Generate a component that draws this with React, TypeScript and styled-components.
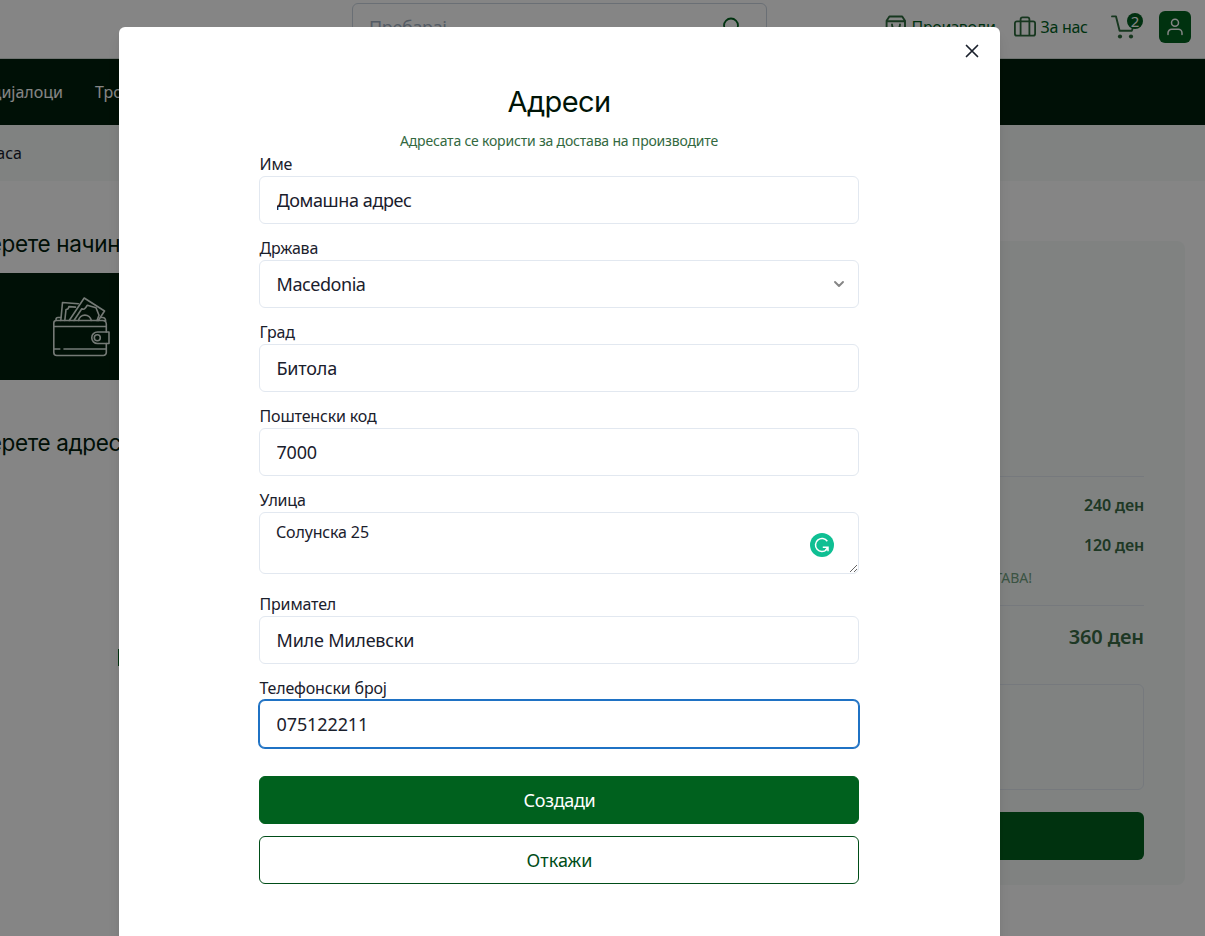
import React from "react";
import styled, { createGlobalStyle } from "styled-components";

const sans = '"Noto Sans", "Open Sans", sans-serif';
const display = 'Inter, "Liberation Sans", sans-serif';

const GlobalStyle = createGlobalStyle`
  *, *::before, *::after { box-sizing: border-box; }
  html, body { margin: 0; padding: 0; background: #fff; overflow: hidden; }
  body { font-family: ${sans}; font-size: 16px; line-height: 24px; color: #1a202c; }
  h1, h2, p { margin: 0; font-weight: 400; }
  button { cursor: pointer; }
`;

const Screen = styled.div`
  position: relative;
  width: 1205px;
  height: 936px;
  overflow: hidden;
  background: #fff;
`;

const Header = styled.header`
  display: flex;
  align-items: flex-start;
  height: 59px;
  padding-left: 352px;
  border-bottom: 1px solid #d5dcd8;
`;

const SearchBox = styled.div`
  display: flex;
  align-items: center;
  justify-content: space-between;
  width: 415px;
  height: 48px;
  margin-top: 3px;
  padding: 0 22px 0 16px;
  border: 1px solid #cbd5e0;
  border-radius: 6px;
  color: #a0aec0;
  font-size: 18px;
  letter-spacing: -0.35px;
`;

const HeaderLinks = styled.nav`
  display: flex;
  align-items: center;
  height: 54px;
  margin-left: 118px;
  color: #00611e;
`;

const HeaderLink = styled.a<{ $width: number }>`
  display: flex;
  align-items: center;
  gap: 4.5px;
  width: ${(p) => p.$width}px;
  letter-spacing: -0.3px;
  white-space: nowrap;
`;

const CartButton = styled.div`
  position: relative;
  display: flex;
  width: 48px;
  height: 28px;
`;

const CartCount = styled.span`
  position: absolute;
  left: 16px;
  top: 0;
  width: 16px;
  height: 16px;
  border-radius: 50%;
  background: #005c1f;
  color: #fff;
  font-size: 15px;
  line-height: 16px;
  text-align: center;
`;

const UserButton = styled.div`
  display: grid;
  place-items: center;
  width: 32px;
  height: 32px;
  border-radius: 6px;
  background: #00611e;
`;

const CategoryBar = styled.nav`
  display: flex;
  align-items: center;
  height: 66px;
  background: #00200c;
  color: #fff;
`;

const Category = styled.a<{ $width: number; $align: "flex-start" | "flex-end" }>`
  display: flex;
  justify-content: ${(p) => p.$align};
  width: ${(p) => p.$width}px;
  margin-right: 32px;
  white-space: nowrap;
`;

const Breadcrumb = styled.div`
  display: flex;
  align-items: center;
  height: 56px;
  background: #f5faf8;
`;

const Crumb = styled.span`
  display: flex;
  justify-content: flex-end;
  width: 22px;
`;

const Main = styled.main`
  display: flex;
  justify-content: space-between;
  padding-right: 20px;
`;

const Checkout = styled.section`
  width: 500px;
  padding-top: 47px;
`;

const SectionTitle = styled.h2`
  display: flex;
  height: 32px;
  margin-left: -51.5px;
  font-family: ${display};
  font-size: 22.5px;
  line-height: 32px;
  color: #00200c;
  letter-spacing: -0.35px;
  white-space: nowrap;
`;

const PaymentOption = styled.div`
  display: flex;
  align-items: center;
  height: 107px;
  margin: 13px 0 47px;
  padding-left: 52px;
  background: #00200c;
`;

const AddAddress = styled.div`
  width: 240px;
  height: 17px;
  margin: 190px 0 0 118px;
  background: #00611e;
`;

const Summary = styled.aside`
  display: flex;
  flex-direction: column;
  width: 420px;
  height: 644px;
  margin-top: 60px;
  padding: 235px 41px 0 40px;
  border-radius: 8px;
  background: #f5faf8;
  color: #3a6b46;
`;

const PriceRow = styled.div<{ $size: number; $height: number; $top?: number; $rule?: boolean }>`
  display: flex;
  align-items: center;
  justify-content: flex-end;
  height: ${(p) => p.$height}px;
  padding-top: ${(p) => p.$top ?? 0}px;
  border-top: ${(p) => (p.$rule ? "1px solid #e2e8f0" : "0")};
  font-size: ${(p) => p.$size}px;
  font-weight: 600;
  letter-spacing: -0.15px;
`;

const ShippingNote = styled.p`
  display: flex;
  justify-content: flex-end;
  height: 40px;
  padding: 0 112px 0 0;
  font-size: 14px;
  line-height: 25px;
  color: #71a07f;
  white-space: nowrap;
`;

const Comment = styled.div`
  height: 106px;
  margin: 17px 0 22px;
  border: 1px solid #e2e8f0;
  border-radius: 6px;
`;

const OrderButton = styled.div`
  height: 48px;
  border-radius: 6px;
  background: #00611e;
`;

const Overlay = styled.div`
  position: absolute;
  inset: 0;
  display: flex;
  justify-content: center;
  align-items: flex-start;
  padding: 27px 86px 0 0;
  background: rgba(0, 0, 0, 0.48);
`;

const Modal = styled.div`
  position: relative;
  flex: none;
  width: 881px;
  height: 960px;
  padding: 56px 141px 0 140px;
  border-radius: 6px;
  background: #fff;
  box-shadow: 0 10px 15px -3px rgba(0, 0, 0, 0.1), 0 4px 6px -2px rgba(0, 0, 0, 0.05);
`;

const CloseButton = styled.button`
  position: absolute;
  top: 8px;
  right: 12px;
  display: grid;
  place-items: center;
  width: 32px;
  height: 32px;
  padding: 0;
  border: 0;
  background: none;
`;

const Title = styled.h1`
  height: 38px;
  font-family: ${display};
  font-size: 29px;
  line-height: 38px;
  letter-spacing: -0.6px;
  text-align: center;
  color: #001407;
`;

const Subtitle = styled.p`
  height: 31px;
  padding-top: 9px;
  font-size: 14px;
  line-height: 22px;
  letter-spacing: -0.19px;
  text-align: center;
  color: #33693f;
`;

const Field = styled.label<{ $gap?: number }>`
  display: flex;
  flex-direction: column;
  margin-bottom: ${(p) => p.$gap ?? 12}px;
`;

const FieldName = styled.span`
  height: 24px;
  padding-left: 0.5px;
  letter-spacing: -0.17px;
`;

const Input = styled.input<{ $focused?: boolean; $spacing?: number }>`
  height: 48px;
  padding: 0 16.5px;
  border: 1px solid ${(p) => (p.$focused ? "#1f72c4" : "#e2e8f0")};
  border-radius: 6px;
  box-shadow: ${(p) => (p.$focused ? "0 0 0 1px #1f72c4" : "none")};
  background: #fff;
  outline: none;
  font-family: ${sans};
  font-size: 18px;
  letter-spacing: ${(p) => p.$spacing ?? -0.2}px;
  color: #1a202c;
`;

const SelectBox = styled.div`
  display: flex;
  align-items: center;
  justify-content: space-between;
  height: 48px;
  padding: 0 12px 0 16.5px;
  border: 1px solid #e2e8f0;
  border-radius: 6px;
  font-size: 18px;
  letter-spacing: -0.45px;
`;

const StreetWrap = styled.div`
  position: relative;
  display: flex;
  height: 62px;
`;

const Street = styled.textarea`
  width: 100%;
  height: 62px;
  padding: 8px 16px;
  border: 1px solid #e2e8f0;
  border-radius: 6px;
  outline: none;
  resize: vertical;
  overflow: hidden;
  font-family: ${sans};
  font-size: 16px;
  line-height: 22px;
  letter-spacing: -0.15px;
  color: #1a202c;
`;

const GrammarBadge = styled.span`
  position: absolute;
  top: 21px;
  right: 25px;
  display: flex;
  width: 24px;
  height: 24px;
`;

const Actions = styled.div`
  display: flex;
  flex-direction: column;
  gap: 12px;
`;

const ActionButton = styled.button<{ $solid?: boolean }>`
  height: 48px;
  padding: 0 5px 0 6px;
  border: 1px solid ${(p) => (p.$solid ? "#00611e" : "#004d18")};
  border-radius: 6px;
  background: ${(p) => (p.$solid ? "#00611e" : "#fff")};
  color: ${(p) => (p.$solid ? "#fff" : "#004d18")};
  font-family: ${sans};
  font-size: 18px;
  letter-spacing: ${(p) => (p.$solid ? -0.3 : 0)}px;
`;

const SearchIcon = () => (
  <svg width="22" height="22" viewBox="0 0 22 22" fill="none" stroke="#00611e" strokeWidth="1.8" strokeLinecap="round">
    <circle cx="9" cy="9.5" r="7" />
    <path d="M14 14.5 19 19.5" />
  </svg>
);

const BagIcon = () => (
  <svg width="22" height="24" viewBox="0 0 22 24" fill="none" stroke="#2c6a3c" strokeWidth="1.9" strokeLinejoin="round" strokeLinecap="round">
    <path d="M1.600 5.800 4.400 1.500h12.800l2.800 4.300V19a2 2 0 0 1-2 2H3.600a2 2 0 0 1-2-2ZM1.600 6.200H20M7 9.500c0 6 8 6 8 0" />
  </svg>
);

const BriefcaseIcon = () => (
  <svg width="22" height="22" viewBox="0 0 22 22" fill="none" stroke="#2c6a3c" strokeWidth="1.8" strokeLinejoin="round">
    <rect x="0.900" y="5.300" width="20.200" height="14.400" rx="2" />
    <path d="M6.600 19.700V3.300a2 2 0 0 1 2-2h4.800a2 2 0 0 1 2 2v16.400" />
  </svg>
);

const CartIcon = () => (
  <svg width="26" height="28" viewBox="0 0 26 28" fill="none" stroke="#2c6a3c" strokeWidth="1.9" strokeLinecap="round" strokeLinejoin="round">
    <path d="M1 3.400H5l3.600 14.300h12.200l2.700-7.500" />
    <circle cx="9" cy="23.500" r="2.100" fill="#2c6a3c" stroke="none" />
    <circle cx="20" cy="23.500" r="2.100" fill="#2c6a3c" stroke="none" />
  </svg>
);

const UserIcon = () => (
  <svg width="18" height="18" viewBox="0 0 18 18" fill="none" stroke="#fff" strokeWidth="1.500" strokeLinecap="round">
    <circle cx="9" cy="4.700" r="3.500" />
    <path d="M2 16.500v-1.500a3.700 3.700 0 0 1 3.700-3.700h6.600a3.700 3.700 0 0 1 3.700 3.700v1.500" />
  </svg>
);

const WalletIcon = () => (
  <svg width="58" height="60" viewBox="0 0 58 60" fill="none" stroke="#e0eae3" strokeWidth="1.600" strokeLinejoin="round" strokeLinecap="round">
    <path d="M8.800 23.500 10.500 5.500l15.800 1.300M12.800 23.500l1.200-11c1.700 0 2.600-1 2.900-2.900l6.600.5" />
    <path d="m17.200 23.500 15-22.500L52.500 14l-6.200 9.500" />
    <path d="m22 23.500 7.800-11.700c1.500.8 3 .3 3.800-1.100l1.700-2.400 8.700 2.400 3 7.500-2 5.300" />
    <path d="M26.500 23.500a6.500 6.500 0 0 1 12.800 0" />
    <path d="M1.800 26v29.500a3 3 0 0 0 3 3h46.500a3 3 0 0 0 3-3V46.500M54.300 35V27a3.500 3.500 0 0 0-3.500-3.500H4.500c-2 0-2.700 1-2.700 2.500M4 23.500v-1c0-1.500.8-2 2-2h2.700M48.500 20.500h2c2 0 3.200 1 3.200 4" />
    <path d="M1.800 29.500h52.500M1.800 52h6M12 52h42.300" />
    <path d="M57 35H45.500a5.700 5.700 0 0 0 0 11.500H57Z" />
    <circle cx="45.300" cy="40.800" r="3" />
  </svg>
);

const CloseIcon = () => (
  <svg width="14" height="14" viewBox="0 0 14 14" stroke="#1a202c" strokeWidth="1.700" strokeLinecap="round">
    <path d="m1.500 1.500 11 11m0-11-11 11" />
  </svg>
);

const ChevronIcon = () => (
  <svg width="14" height="14" viewBox="0 0 14 14" fill="none" stroke="#858585" strokeWidth="1.900" strokeLinecap="round" strokeLinejoin="round">
    <path d="m3 5 4 4 4-4" />
  </svg>
);

const GrammarIcon = () => (
  <svg width="24" height="24" viewBox="0 0 24 24" fill="none">
    <circle cx="12" cy="12" r="12" fill="#0fbf93" />
    <path d="M17.300 8.200A6.500 6.500 0 1 0 16.500 16.700M12.800 14.200h5.200v4M18 14.200l-2.500 3" stroke="#fff" strokeWidth="1.500" />
  </svg>
);

const TextField = ({ name, value, spacing, focused, gap }: { name: string; value: string; spacing?: number; focused?: boolean; gap?: number }) => (
  <Field $gap={gap}>
    <FieldName>{name}</FieldName>
    <Input defaultValue={value} $spacing={spacing} $focused={focused} />
  </Field>
);

export default function App() {
  return (
    <>
      <GlobalStyle />
      <Screen>
        <Header>
          <SearchBox>
            Пребарај
            <SearchIcon />
          </SearchBox>
          <HeaderLinks>
            <HeaderLink $width={129}>
              <BagIcon />
              Производи
            </HeaderLink>
            <HeaderLink $width={97}>
              <BriefcaseIcon />
              За нас
            </HeaderLink>
            <CartButton>
              <CartIcon />
              <CartCount>2</CartCount>
            </CartButton>
            <UserButton>
              <UserIcon />
            </UserButton>
          </HeaderLinks>
        </Header>
        <CategoryBar>
          <Category $width={63} $align="flex-end">Специјалоци</Category>
          <Category $width={80} $align="flex-start">Трошоци</Category>
        </CategoryBar>
        <Breadcrumb>
          <Crumb>Каса</Crumb>
        </Breadcrumb>
        <Main>
          <Checkout>
            <SectionTitle>Изберете начин</SectionTitle>
            <PaymentOption>
              <WalletIcon />
            </PaymentOption>
            <SectionTitle>Изберете адреса</SectionTitle>
            <AddAddress />
          </Checkout>
          <Summary>
            <PriceRow $size={16} $height={49} $top={8} $rule>240 ден</PriceRow>
            <PriceRow $size={16} $height={40}>120 ден</PriceRow>
            <ShippingNote>ДОСТАВА!</ShippingNote>
            <PriceRow $size={20} $height={62} $rule>360 ден</PriceRow>
            <Comment />
            <OrderButton />
          </Summary>
        </Main>
        <Overlay>
          <Modal>
            <CloseButton aria-label="Затвори">
              <CloseIcon />
            </CloseButton>
            <Title>Адреси</Title>
            <Subtitle>Адресата се користи за достава на производите</Subtitle>
            <TextField name="Име" value="Домашна адрес" spacing={-0.4} />
            <Field>
              <FieldName>Држава</FieldName>
              <SelectBox>
                Macedonia
                <ChevronIcon />
              </SelectBox>
            </Field>
            <TextField name="Град" value="Битола" />
            <TextField name="Поштенски код" value="7000" />
            <Field $gap={18}>
              <FieldName>Улица</FieldName>
              <StreetWrap>
                <Street defaultValue="Солунска 25" />
                <GrammarBadge>
                  <GrammarIcon />
                </GrammarBadge>
              </StreetWrap>
            </Field>
            <TextField name="Примател" value="Миле Милевски" />
            <TextField name="Телефонски број" value="075122211" spacing={-0.1} focused gap={28} />
            <Actions>
              <ActionButton $solid>Создади</ActionButton>
              <ActionButton>Откажи</ActionButton>
            </Actions>
          </Modal>
        </Overlay>
      </Screen>
    </>
  );
}
